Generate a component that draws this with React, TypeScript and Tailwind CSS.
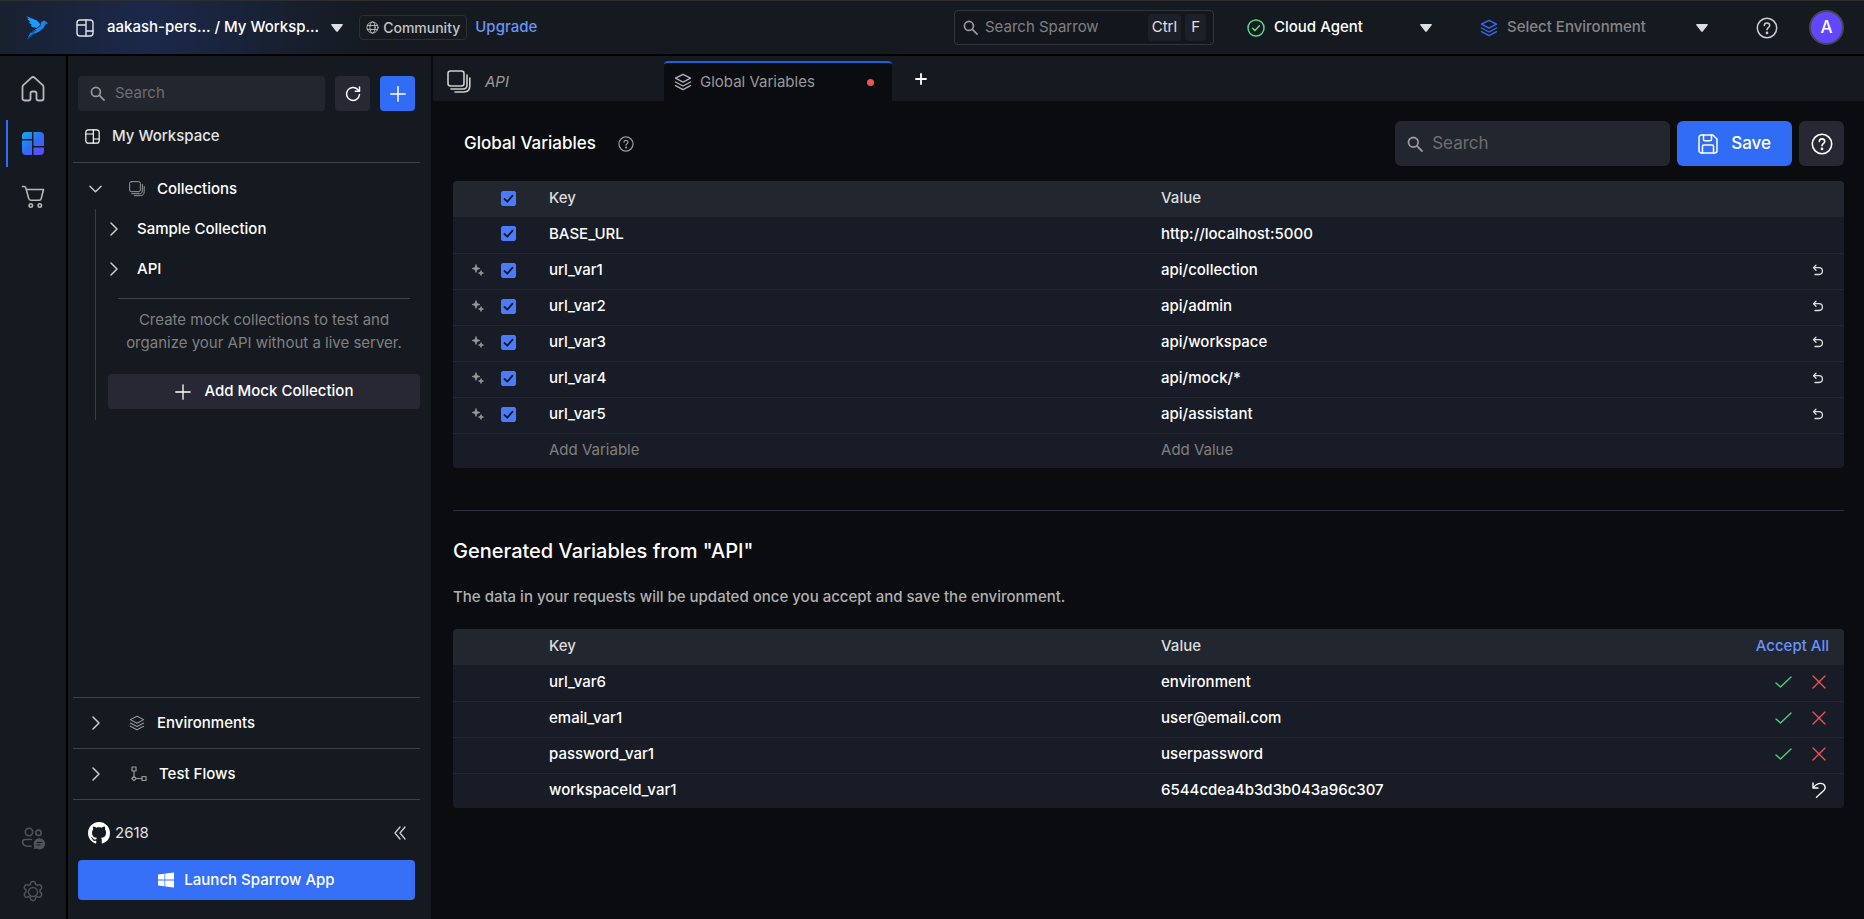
import { ReactNode, useState } from 'react'

const variables = [
  { key: 'BASE_URL', value: 'http://localhost:5000', generated: false },
  { key: 'url_var1', value: 'api/collection', generated: true },
  { key: 'url_var2', value: 'api/admin', generated: true },
  { key: 'url_var3', value: 'api/workspace', generated: true },
  { key: 'url_var4', value: 'api/mock/*', generated: true },
  { key: 'url_var5', value: 'api/assistant', generated: true },
]

const generatedVariables = [
  { key: 'url_var6', value: 'environment', rejected: false },
  { key: 'email_var1', value: 'user@email.com', rejected: false },
  { key: 'password_var1', value: 'userpassword', rejected: false },
  { key: 'workspaceId_var1', value: '6544cdea4b3d3b043a96c307', rejected: true },
]

function Icon({ box = '0 0 24 24', stroke = 1.5, className, children }: { box?: string; stroke?: number; className: string; children: ReactNode }) {
  return (
    <svg viewBox={box} fill="none" stroke="currentColor" strokeWidth={stroke} strokeLinecap="round" strokeLinejoin="round" className={`shrink-0 ${className}`} aria-hidden="true">
      {children}
    </svg>
  )
}

function Logo() {
  return (
    <svg viewBox="0 0 22 24" className="h-6 w-[22px] shrink-0" aria-hidden="true">
      <path d="M0 0 L11 4.5 L14.5 8.5 L11 12 L7 11.5 L4.5 9.5 L6 9 L2.5 6.5 L4.5 6.3 L1 2.8 L3 2.8 Z" fill="#1a9bff" />
      <path d="M14.5 9 L15.5 5.8 L18 4.6 L20 5.4 L22 7.6 L19.6 8 L17.5 12 L12.5 16 L7.5 18 L1.2 23.5 L4 17 L10.5 12.8 Z" fill="#1488f0" />
      <path d="M7 11.7 L11 12.2 M4 17 L10 14.5 M2 22 L8 16.5 M11 12.2 L15 9" stroke="#12233d" strokeWidth="0.6" />
    </svg>
  )
}

function LayoutIcon({ className, stroke = 1.5 }: { className: string; stroke?: number }) {
  return (
    <Icon box="0 0 18 18" stroke={stroke} className={className}>
      <rect x="1" y="1" width="16" height="16" rx="3" />
      <path d="M10 1v16M1 6h9M10 12h7" />
    </Icon>
  )
}

function LayersIcon({ className, stroke = 1.2 }: { className: string; stroke?: number }) {
  return (
    <Icon box="0 0 18 18" stroke={stroke} className={className}>
      <path d="M9 1.3 16.5 5.2 9 9.2 1.5 5.2Z" />
      <path d="m1.5 9 7.5 4 7.5-4M1.5 12.7l7.5 4 7.5-4" />
    </Icon>
  )
}

function StackIcon({ className, stroke = 1.5 }: { className: string; stroke?: number }) {
  return (
    <Icon box="0 0 24 24" stroke={stroke} className={className}>
      <rect x="1" y="1" width="16" height="15" rx="2.5" />
      <path d="M20 5v10c0 2.5-1.5 4-4 4H4" />
      <path d="M22.8 8v8c0 4-2 6-6 6H8" />
    </Icon>
  )
}

function SearchIcon({ className }: { className: string }) {
  return (
    <Icon box="0 0 16 16" stroke={1.8} className={className}>
      <circle cx="6.3" cy="6.3" r="4.8" />
      <path d="m10 10 5 5" />
    </Icon>
  )
}

function HelpIcon({ className, stroke = 1.5 }: { className: string; stroke?: number }) {
  return (
    <Icon box="0 0 22 22" stroke={stroke} className={className}>
      <circle cx="11" cy="11" r="9.7" />
      <path d="M8.3 8.6c0-3.6 5.4-3.6 5.4 0 0 2-2.7 2.1-2.7 4.2" />
      <circle cx="11" cy="15.9" r="0.6" fill="currentColor" />
    </Icon>
  )
}

function ChevronRight() {
  return (
    <Icon box="0 0 8 14" className="h-[14px] w-2 text-[#cccccc]">
      <path d="m1 1 6 6-6 6" />
    </Icon>
  )
}

function Caret() {
  return (
    <svg viewBox="0 0 12 8" className="h-2 w-3 shrink-0 fill-[#dedede]" aria-hidden="true">
      <path d="M1 0h10c.8 0 1 .6.6 1.2L7 7.2c-.5.7-1.5.7-2 0L.4 1.2C0 .6.2 0 1 0Z" />
    </svg>
  )
}

function Checkbox({ label }: { label: string }) {
  const [checked, setChecked] = useState(true)
  return (
    <span className="relative block size-[15px]">
      <input
        type="checkbox"
        aria-label={label}
        checked={checked}
        onChange={() => setChecked(!checked)}
        className="block size-[15px] appearance-none rounded-xs border border-[#4a7bff] checked:bg-[#4a7bff]"
      />
      {checked && (
        <Icon box="0 0 15 15" stroke={1.8} className="pointer-events-none absolute inset-0 size-[15px] text-[#14181f]">
          <path d="m3.5 8 2.8 2.7 5.2-6" />
        </Icon>
      )}
    </span>
  )
}

function TopBar() {
  return (
    <header className="flex h-14 shrink-0 items-center border-t border-b-2 border-t-[#2e2e2e] border-b-black bg-linear-to-r from-[#182130] via-[#1b284a] via-8% to-[#151a20] to-20% pr-5 pl-[26px]">
      <Logo />
      <button className="ml-7 flex items-center text-[#dfe3ea]">
        <LayoutIcon className="size-[18px]" stroke={1.4} />
        <span className="ml-[13px] text-[15px] font-medium text-white">aakash-pers... / My Worksp...</span>
        <span className="ml-3"><Caret /></span>
      </button>
      <span className="ml-4 flex h-[25px] items-center gap-1 rounded border border-[#2b2f38] px-[6px] text-sm font-medium text-[#c4c4c4]">
        <Icon box="0 0 14 14" stroke={1} className="size-[13px]">
          <circle cx="7" cy="7" r="6" />
          <ellipse cx="7" cy="7" rx="2.8" ry="6" />
          <path d="M1.5 4.8h11M1.500 9.2h11" />
        </Icon>
        Community
      </span>
      <a href="#" className="ml-2 text-[15px] font-medium text-[#6894f9]">Upgrade</a>

      <label className="ml-auto flex h-[35px] w-[260px] items-center rounded border border-[#31353f] bg-[#13171d] pr-[7px] pl-2 text-[#999999]">
        <SearchIcon className="size-[15px]" />
        <input aria-label="Search Sparrow" placeholder="Search Sparrow" className="ml-[7px] min-w-0 flex-1 text-[15px] outline-none placeholder:text-[#808080]" />
        <kbd className="rounded bg-[#1c2029] px-1 py-[2px] font-['Inter',sans-serif] text-[15px] text-[#e0e0e0]">Ctrl</kbd>
        <kbd className="ml-1 rounded bg-[#1c2029] px-[6px] py-[2px] font-['Inter',sans-serif] text-[15px] text-[#e0e0e0]">F</kbd>
      </label>
      <button className="ml-[33px] flex w-[185px] items-center text-[15px] font-medium text-white">
        <Icon box="0 0 18 18" className="size-[18px] text-[#5fd38d]">
          <circle cx="9" cy="9" r="8" />
          <path d="m5.6 9.3 2.4 2.3 4.4-4.8" />
        </Icon>
        <span className="mr-auto ml-[9px]">Cloud Agent</span>
        <Caret />
      </button>
      <button className="ml-12 flex w-[228px] items-center text-[15px] font-medium text-[#858585]">
        <LayersIcon className="size-[18px] text-[#316cf6]" stroke={1.4} />
        <span className="mr-auto ml-[9px]">Select Environment</span>
        <Caret />
      </button>
      <button aria-label="Help" className="ml-12 text-[#cccccc]"><HelpIcon className="size-[22px]" /></button>
      <button className="ml-[31px] flex size-[35px] items-center justify-center rounded-full border-2 border-[#45474f] bg-[#6147ff] text-[17px] font-medium text-white">A</button>
    </header>
  )
}

function Rail() {
  return (
    <nav className="flex w-[68px] shrink-0 flex-col border-r-2 border-black bg-[#151a20] pt-[6px] text-[#b8b8b8]">
      <a href="#" aria-label="Home" className="flex h-[54px] items-center justify-center">
        <Icon box="0 0 24 26" stroke={1.8} className="h-[26px] w-6">
          <path d="M1.5 11.2c0-1 .4-1.8 1.1-2.4l7.6-7c1.1-1 2.5-1 3.6 0l7.6 7c.7.6 1.1 1.4 1.1 2.4V22.5c0 1.2-.8 2-2 2h-3c-1.2 0-2-.8-2-2V17.500c0-1.200-.8-2-2-2h-2c-1.2 0-2 .8-2 2v5c0 1.2-.8 2-2 2h-4c-1.2 0-2-.8-2-2Z" />
        </Icon>
      </a>
      <a href="#" aria-label="Workspace" className="flex h-[54px] items-center">
        <span className="ml-[6px] h-[47px] w-[2px] bg-[#316cf6]" />
        <svg viewBox="0 0 22 23" className="ml-[14px] h-[23px] w-[22px]" aria-hidden="true">
          <defs>
            <linearGradient id="tile" gradientUnits="userSpaceOnUse" x1="0" y1="0" x2="22" y2="23">
              <stop offset="0" stopColor="#11adf0" />
              <stop offset="0.5" stopColor="#316cf6" />
              <stop offset="1" stopColor="#6147ff" />
            </linearGradient>
          </defs>
          <g fill="url(#tile)">
            <path d="M4 0h6v7H0V4a4 4 0 0 1 4-4Z" />
            <path d="M0 8.500h10V23H4a4 4 0 0 1-4-4Z" />
            <path d="M11.500 0H18a4 4 0 0 1 4 4v10H11.500Z" />
            <path d="M11.500 15.500H22V19a4 4 0 0 1-4 4h-6.500Z" />
          </g>
        </svg>
      </a>
      <a href="#" aria-label="Marketplace" className="flex h-[54px] items-center justify-center">
        <Icon box="0 0 24 24" stroke={1.6} className="size-6">
          <path d="M1.5 1.5h1.8c.7 0 1.2.4 1.4 1.1l3 10.8c.3 1.2 1 1.8 2.2 1.8h8.3c1.1 0 1.800-.5 2-1.600L22.5 4.500H5.300" />
          <circle cx="9.8" cy="20.5" r="1.7" />
          <circle cx="18.8" cy="20.5" r="1.7" />
        </Icon>
      </a>
      <button aria-label="Community" className="mt-auto flex h-[54px] items-center justify-center text-[#50535b]">
        <Icon box="0 0 24 24" stroke={1.6} className="size-6">
          <circle cx="8" cy="6" r="3.7" />
          <circle cx="17.5" cy="6.8" r="2.7" />
          <path d="M10.5 13.500H4c-1.300 0-2.400 1-2.400 2.400 0 2.700 2.300 4.300 6.400 4.300h2" />
          <path d="M18.2 12.200a5.600 5.600 0 0 0-5 8l-.5 2.800 2.900-.4a5.600 5.600 0 1 0 2.600-10.400Z" fill="currentColor" stroke="none" />
          <path d="M16 16.500h4.500M16 19h3" stroke="#151a20" strokeWidth="1.2" />
        </Icon>
      </button>
      <button aria-label="Settings" className="flex h-[54px] items-center justify-center text-[#50535b]">
        <Icon className="size-6">
          <circle cx="12" cy="12" r="4.5" />
          <path d="M9.600 3.100c.2-1 .9-1.600 1.900-1.600h1c1 0 1.700.6 1.900 1.600l.2 1.300 1.700 1 1.300-.5c.9-.4 1.900 0 2.400.8l.5.9c.5.9.3 1.800-.5 2.500l-1 .8v2.200l1 .8c.8.7 1 1.600.5 2.500l-.5.9c-.5.8-1.500 1.200-2.400.8l-1.300-.5-1.700 1-.2 1.300c-.2 1-.9 1.600-1.900 1.600h-1c-1 0-1.700-.6-1.900-1.600l-.2-1.300-1.700-1-1.300.5c-.9.4-1.900 0-2.400-.8l-.5-.9c-.5-.9-.3-1.800.5-2.500l1-.8v-2.200l-1-.8c-.8-.7-1-1.600-.5-2.500l.5-.9c.5-.8 1.500-1.200 2.400-.8l1.300.5 1.700-1Z" />
        </Icon>
      </button>
    </nav>
  )
}

function Sidebar() {
  return (
    <aside className="flex w-[365px] shrink-0 flex-col border-r-2 border-[#0b0c0f] bg-[#151a20] pr-[11px] pl-[5px] text-[15px] font-medium text-white">
      <div className="flex gap-[10px] px-[5px] pt-5">
        <label className="flex h-[35px] min-w-0 flex-1 items-center rounded bg-[#22262f] px-3 text-[#999999]">
          <SearchIcon className="size-[15px]" />
          <input aria-label="Search collections" placeholder="Search" className="ml-[10px] w-full min-w-0 text-[15px] font-normal outline-none placeholder:text-[#6e6e6e]" />
        </label>
        <button aria-label="Refresh" className="flex size-[35px] items-center justify-center rounded bg-[#272834]">
          <Icon box="0 0 16 16" className="size-4">
            <path d="M14.500 8.500A6.500 6.500 0 1 1 12.800 3.500L14.500 5.200M14.500 1v4.200h-4.200" />
          </Icon>
        </button>
        <button aria-label="Add" className="flex size-[35px] items-center justify-center rounded bg-[#316cf6]">
          <Icon box="0 0 16 16" className="size-4"><path d="M8 .8v14.400M.8 8h14.400" /></Icon>
        </button>
      </div>
      <div className="flex h-[52px] items-center border-b border-[#3f424b] pl-3 text-[#e4e4e4]">
        <LayoutIcon className="size-[15px] text-white" stroke={1.4} />
        <span className="ml-3">My Workspace</span>
      </div>

      <button className="mt-[6px] flex h-10 items-center pl-4">
        <Icon box="0 0 14 8" className="h-2 w-[13px] text-[#cccccc]"><path d="m1 1 6 6 6-6" /></Icon>
        <StackIcon className="ml-[27px] size-4 text-[#999999]" />
        <span className="ml-3">Collections</span>
      </button>
      <div className="ml-[22px] flex h-[211px] flex-col border-l border-[#3a3d45] pl-3">
        <button className="flex h-10 items-center pl-[2px]">
          <ChevronRight />
          <span className="ml-[19px]">Sample Collection</span>
        </button>
        <button className="flex h-10 items-center pl-[2px]">
          <ChevronRight />
          <span className="ml-[19px]">API</span>
        </button>
        <div className="mx-[10px] mt-[9px] border-t border-[#3f424b]" />
        <p className="mt-[9px] text-center leading-[23px] font-normal text-[#808080]">
          Create mock collections to test and<br />organize your API without a live server.
        </p>
        <button className="mt-5 flex h-[35px] shrink-0 items-center justify-center gap-[14px] rounded bg-[#272834]">
          <Icon box="0 0 16 16" stroke={1.3} className="size-4"><path d="M8 .8v14.400M.8 8h14.400" /></Icon>
          Add Mock Collection
        </button>
      </div>

      <button className="mt-auto flex h-[51px] items-center border-t border-[#3f424b] pl-[19px]">
        <ChevronRight />
        <LayersIcon className="ml-[29px] size-4 text-[#999999]" />
        <span className="ml-3">Environments</span>
      </button>
      <button className="flex h-[52px] items-center border-y border-[#3f424b] pl-[19px]">
        <ChevronRight />
        <Icon box="0 0 16 16" stroke={1.2} className="ml-[31px] size-4 text-[#999999]">
          <rect x="1" y="1" width="4" height="4" />
          <rect x="11" y="10.5" width="4" height="4" />
          <path d="M3 5v5.500M3 10.300l2.200 2.200L3 14.700.8 12.500ZM5.200 12.500H11" />
        </Icon>
        <span className="ml-3">Test Flows</span>
      </button>
      <div className="flex h-[60px] items-center pt-[6px] pr-[14px] pl-[15px]">
        <a href="#" className="flex items-center gap-[5px] text-[#e0e0e0]">
          <svg viewBox="0 0 16 16" className="size-[22px] fill-white" aria-hidden="true">
            <path d="M8 0C3.580 0 0 3.580 0 8c0 3.540 2.290 6.530 5.470 7.590.4.070.55-.17.55-.38 0-.19-.01-.82-.01-1.490-2.010.37-2.530-.49-2.690-.94-.09-.23-.48-.94-.82-1.130-.28-.15-.68-.52-.01-.53.63-.01 1.080.58 1.230.82.72 1.210 1.870.87 2.330.66.07-.52.28-.87.51-1.070-1.780-.2-3.640-.89-3.640-3.950 0-.87.31-1.590.82-2.150-.08-.2-.36-1.020.08-2.120 0 0 .67-.21 2.200.82.64-.18 1.320-.27 2-.27s1.360.09 2 .27c1.530-1.040 2.200-.82 2.200-.82.44 1.100.16 1.920.08 2.120.51.56.82 1.270.82 2.150 0 3.070-1.870 3.750-3.650 3.950.29.25.54.73.54 1.480 0 1.070-.01 1.930-.01 2.200 0 .21.15.46.55.38A8.010 8.010 0 0 0 16 8c0-4.420-3.580-8-8-8Z" />
          </svg>
          <span className="font-normal">2618</span>
        </a>
        <button aria-label="Collapse sidebar" className="ml-auto text-[#cccccc]">
          <Icon box="0 0 12 14" stroke={1.4} className="h-[14px] w-3"><path d="M6 1 1 7l5 6M11 1 6 7l5 6" /></Icon>
        </button>
      </div>
      <button className="mx-[5px] mb-[19px] flex h-10 shrink-0 items-center justify-center gap-[10px] rounded bg-[#3670f7]">
        <svg viewBox="0 0 16 16" className="size-4 fill-white" aria-hidden="true">
          <path d="M0 2.600 6.500 1.700v5.900H0ZM7.200 1.600 16 .4v7.200H7.200ZM0 8.400h6.500v5.900L0 13.400ZM7.200 8.400H16v7.200l-8.800-1.200Z" />
        </svg>
        Launch Sparrow App
      </button>
    </aside>
  )
}

function Tabs() {
  return (
    <div className="flex h-[45px] shrink-0 items-end bg-[#151a20] text-[15px]">
      <button className="flex h-10 w-[231px] items-center pt-[2px] pl-[14px] text-[#999999] italic">
        <StackIcon className="size-6 text-[#cccccc]" stroke={1.6} />
        <span className="ml-[14px]">API</span>
      </button>
      <button className="flex h-10 w-[228px] items-center rounded-t border-t-2 border-[#1464e0] bg-[#0b0c0f] pl-[10px] text-[#999999]">
        <LayersIcon className="size-[18px] text-[#a9b0c0]" stroke={1.4} />
        <span className="ml-2">Global Variables</span>
        <span className="mr-[18px] ml-auto size-[7px] rounded-full bg-[#f0524f]" />
      </button>
      <button aria-label="New tab" className="ml-[23px] flex h-[45px] items-center text-white">
        <Icon box="0 0 12 12" stroke={1.8} className="size-3"><path d="M6 1v10M1 6h10" /></Icon>
      </button>
    </div>
  )
}

function Columns() {
  return (
    <colgroup>
      <col className="w-12" />
      <col className="w-12" />
      <col className="w-[44%]" />
      <col />
      <col className="w-24" />
    </colgroup>
  )
}

function VariablesTable() {
  return (
    <div className="mt-[15px] overflow-hidden rounded bg-[#181c26]">
      <table className="w-full table-fixed text-left text-[15px] font-medium [&_td]:pb-[2px] [&_th]:pb-[2px]">
        <Columns />
        <thead>
          <tr className="h-9 bg-[#22262f] text-[#dddddd]">
            <td />
            <td><Checkbox label="Select all variables" /></td>
            <th className="font-medium">Key</th>
            <th className="font-medium">Value</th>
            <td />
          </tr>
        </thead>
        <tbody>
          {variables.map((v) => (
            <tr key={v.key} className="h-9 border-b border-[#22262f]">
              <td className="pl-[19px]">
                {v.generated && (
                  <svg viewBox="0 0 12 12" className="size-3 fill-[#999999]" aria-hidden="true">
                    <path d="M4 .5 5 3.600 8 4.500 5 5.500 4 8.500 3 5.500 0 4.500 3 3.600ZM9 6.500l.7 1.800 1.800.7-1.800.7L9 11.500l-.7-1.800L6.500 9l1.800-.7Z" stroke="#999999" strokeWidth="0.7" />
                  </svg>
                )}
              </td>
              <td><Checkbox label={v.key} /></td>
              <td>{v.key}</td>
              <td>{v.value}</td>
              <td className="pr-5">
                {v.generated && (
                  <button aria-label={`Undo ${v.key}`} className="ml-auto block text-[#dddddd]">
                    <Icon box="0 0 12 12" stroke={1.3} className="size-3">
                      <path d="M4 1.200 1.500 3.700 4 6.200M1.500 3.700H7a3.400 3.400 0 0 1 0 6.800H3" />
                    </Icon>
                  </button>
                )}
              </td>
            </tr>
          ))}
          <tr className="h-[35px]">
            <td />
            <td />
            <td><input aria-label="New variable key" placeholder="Add Variable" className="block w-full font-normal outline-none placeholder:text-[#808080]" /></td>
            <td><input aria-label="New variable value" placeholder="Add Value" className="block w-full font-normal outline-none placeholder:text-[#808080]" /></td>
            <td />
          </tr>
        </tbody>
      </table>
    </div>
  )
}

function GeneratedTable() {
  return (
    <div className="mt-5 overflow-hidden rounded bg-[#181c26]">
      <table className="w-full table-fixed text-left text-[15px] font-medium [&_td]:pb-[2px] [&_th]:pb-[2px]">
        <Columns />
        <thead>
          <tr className="h-9 bg-[#22262f] text-[#dddddd]">
            <td />
            <td />
            <th className="font-medium">Key</th>
            <th className="font-medium">Value</th>
            <td className="pr-[15px] text-right">
              <button className="whitespace-nowrap text-[#6894f9]">Accept All</button>
            </td>
          </tr>
        </thead>
        <tbody>
          {generatedVariables.map((v) => (
            <tr key={v.key} className="h-9 border-b border-[#22262f] last:h-[35px] last:border-b-0">
              <td />
              <td />
              <td>{v.key}</td>
              <td>{v.value}</td>
              <td className="pr-[18px]">
                <div className="flex items-center justify-end gap-5">
                  {v.rejected ? (
                    <button aria-label="Restore" className="text-white">
                      <Icon box="0 0 14 16" stroke={1.4} className="h-4 w-[14px]">
                        <path d="M1 1v5h5M1 6c2-2.600 4.500-4.600 7.500-4.600 4.200 0 5.900 4 3.500 6.800L4.500 15.300" />
                      </Icon>
                    </button>
                  ) : (
                    <>
                      <button aria-label="Accept" className="text-[#45d17d]">
                        <Icon box="0 0 17 12" stroke={1.4} className="h-3 w-[17px]"><path d="m1 7 4.500 4L16 1" /></Icon>
                      </button>
                      <button aria-label="Reject" className="text-[#f0524f]">
                        <Icon box="0 0 14 14" stroke={1.4} className="size-[14px]"><path d="m1 1 12 12M13 1 1 13" /></Icon>
                      </button>
                    </>
                  )}
                </div>
              </td>
            </tr>
          ))}
        </tbody>
      </table>
    </div>
  )
}

export default function App() {
  return (
    <div className="flex h-screen flex-col bg-[#0b0c0f] font-['Inter',sans-serif] text-white">
      <TopBar />
      <div className="flex min-h-0 flex-1">
        <Rail />
        <Sidebar />
        <main className="flex min-w-0 flex-1 flex-col">
          <Tabs />
          <div className="flex-1 overflow-auto px-5 pt-5">
            <div className="flex items-center">
              <h1 className="ml-[11px] text-[17px] font-medium">Global Variables</h1>
              <button aria-label="About global variables" className="ml-[22px] text-[#999999]"><HelpIcon className="size-4" stroke={1.7} /></button>
              <label className="ml-auto flex h-[45px] w-[275px] items-center rounded-md bg-[#22262f] px-3 text-[#999999]">
                <SearchIcon className="size-4" />
                <input aria-label="Search variables" placeholder="Search" className="ml-[9px] w-full min-w-0 text-[17px] outline-none placeholder:text-[#6e6e6e]" />
              </label>
              <button className="ml-[7px] flex h-[45px] items-center gap-[13px] rounded-md bg-[#316cf6] px-[21px] text-[17px] font-medium">
                <Icon box="0 0 20 20" className="size-5">
                  <path d="M3.500 1h11.300L19 5v11.500a2.500 2.500 0 0 1-2.500 2.500h-13A2.500 2.500 0 0 1 1 16.500v-13A2.500 2.500 0 0 1 3.500 1Z" />
                  <path d="M5.500 1v4.500c0 .8.5 1.300 1.300 1.300h5.400c.8 0 1.300-.5 1.300-1.300V1M4.500 19v-6.700c0-.8.5-1.300 1.300-1.300h8.400c.8 0 1.300.5 1.300 1.300V19" />
                </Icon>
                Save
              </button>
              <button aria-label="Help" className="ml-[7px] flex size-[45px] items-center justify-center rounded-md bg-[#272834]"><HelpIcon className="size-[22px]" stroke={1.6} /></button>
            </div>
            <VariablesTable />
            <hr className="mt-[42px] border-[#2f323d]" />
            <h2 className="mt-[26px] text-xl font-medium">Generated Variables from "API"</h2>
            <p className="mt-5 text-[15px] leading-6 font-medium text-[#b0b0b0]">The data in your requests will be updated once you accept and save the environment.</p>
            <GeneratedTable />
          </div>
        </main>
      </div>
    </div>
  )
}
